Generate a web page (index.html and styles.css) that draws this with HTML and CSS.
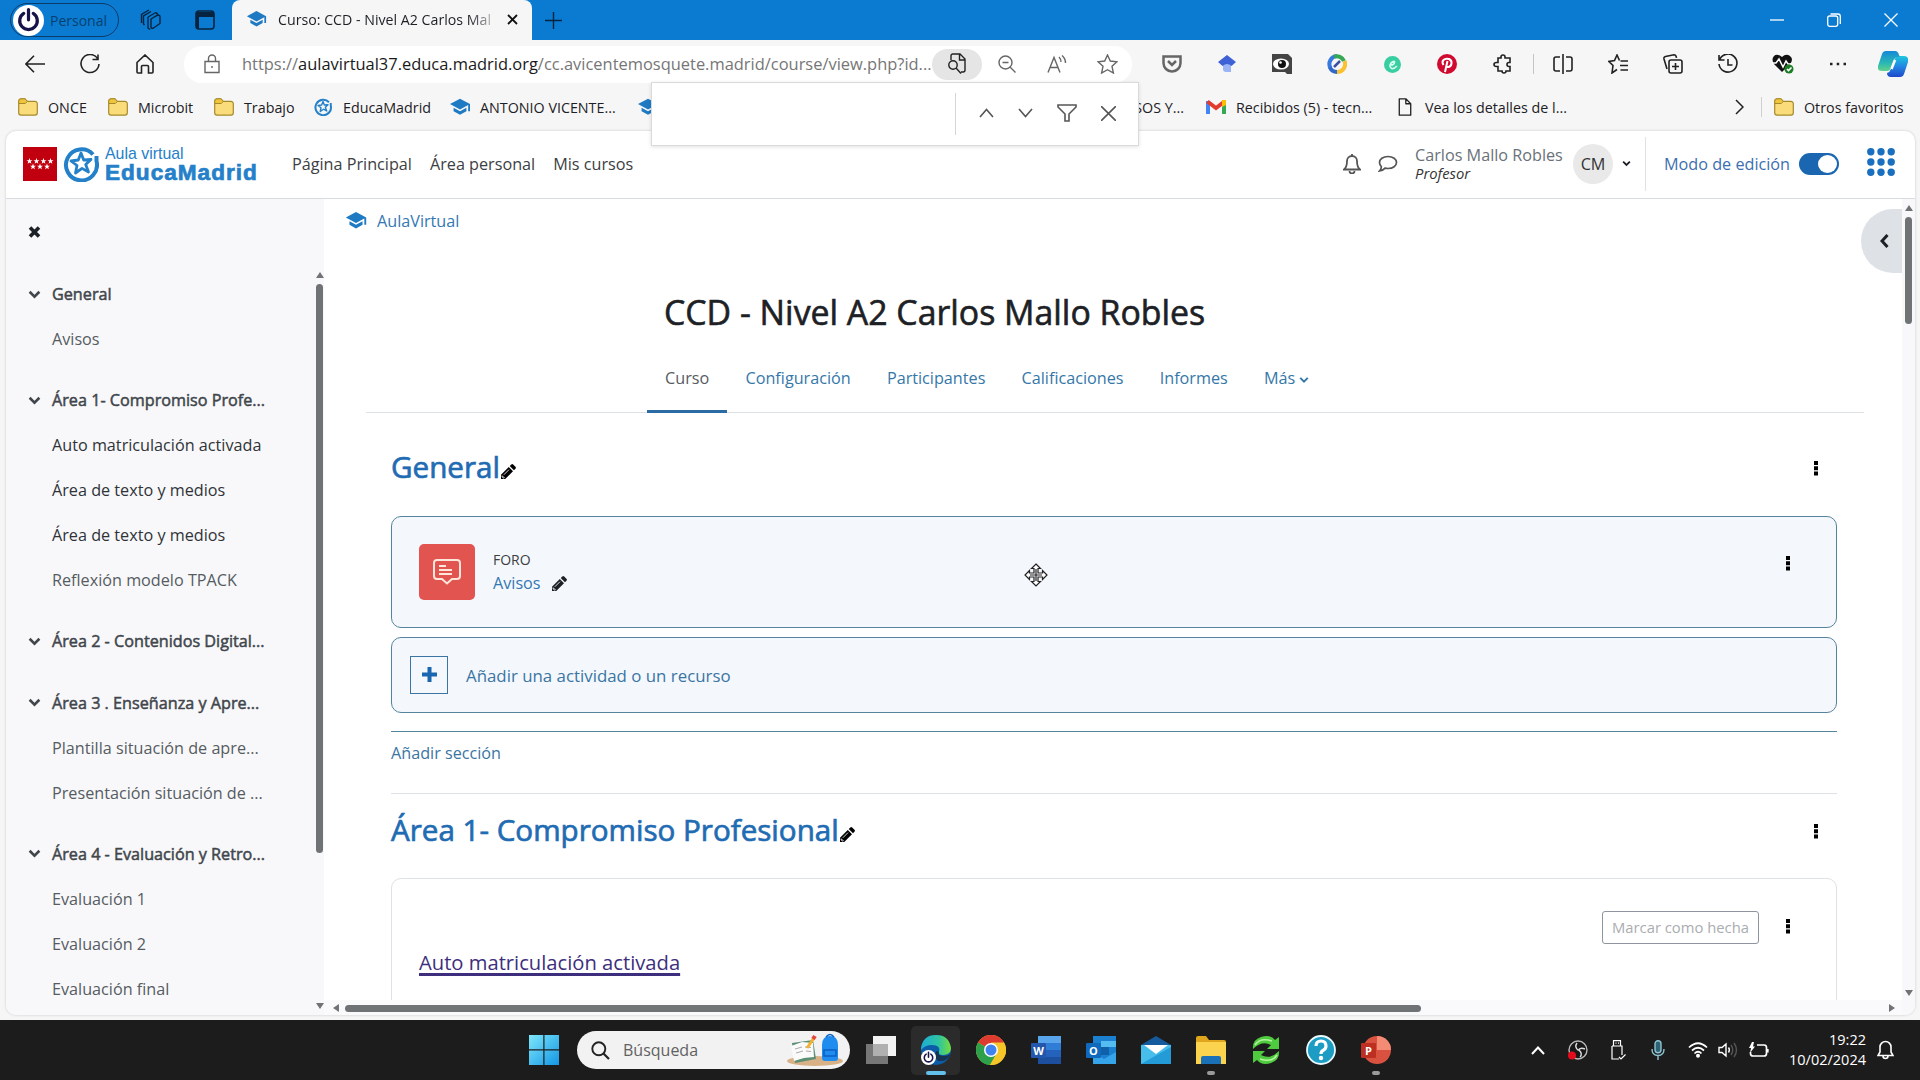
FILE: index.html
```html
<!DOCTYPE html>
<html lang="es">
<head>
    <meta charset="UTF-8">
    <meta name="viewport" content="width=device-width, initial-scale=1.0">
    <title>Curso: CCD - Nivel A2 Carlos Mallo Robles</title>
    <link rel="stylesheet" href="styles.css">
</head>
<body>
    <!-- Shared icons -->
    <svg class="sprite">
        <symbol id="cap" viewBox="0 0 24 20">
            <path d="M12 0 0 6.5 12 13l9.8-5.3V15H24V6.5z"/>
            <path d="M4.3 10.8V15l7.7 4.3 7.7-4.3v-4.2L12 15z"/>
        </symbol>
        <symbol id="folder" viewBox="0 0 20 18">
            <path d="M.7 3.5A2.5 2.5 0 0 1 3 .8h4l2 2.5h8a2.4 2.4 0 0 1 2.3 2.5v9a2.4 2.4 0 0 1-2.3 2.4H3a2.4 2.4 0 0 1-2.3-2.4z" fill="#fbdc7b" stroke="#a58a2c" stroke-width="1.2"/>
            <path d="M.8 5.5h6.5L9.400 3.300 7 .8H3A2.500 2.500 0 0 0 .7 3.500z" fill="#f0c53c" stroke="#a58a2c"/>
        </symbol>
        <symbol id="star-logo" viewBox="0 0 36 36">
            <path d="M30 8.500A15.500 15.500 0 1 0 33.500 15V10" fill="none" stroke="#2480c9" stroke-width="4"/>
            <path d="m18 7 2.700 7 7.300-.5-5.300 5 2.800 7.500-6.500-3.600-6.500 4.600 1.500-7.500-6-4.500 7.300-1z" fill="none" stroke="#2480c9" stroke-width="2.800" stroke-linejoin="round"/>
        </symbol>
        <symbol id="power" viewBox="0 0 24 24">
            <circle cx="12" cy="12" r="12" fill="#fff"/>
            <path d="M8.300 6.500a6.800 6.800 0 1 0 7.400 0M12 3.500v8" fill="none" stroke="#17134a" stroke-width="2.500" stroke-linecap="round"/>
        </symbol>
        <symbol id="chev" viewBox="0 0 12 8">
            <path d="m1.500 1.500 4.500 4.500 4.500-4.500" fill="none" stroke="currentColor" stroke-width="2.400"/>
        </symbol>
        <symbol id="pencil" viewBox="0 0 16 16">
            <path d="M0 16v-4.500L8.300 3.200l4.500 4.500L4.500 16zM9.300 2.200 11 .6q1-1 2 0L15.400 3q1 1 0 2l-1.600 1.700z"/>
            <path d="m1.300 12.500 2.200 2.200-.8.5-1.500-1.500zM3 11.500l5.500-5.500" fill="none" stroke="#fff" stroke-width=".9"/>
        </symbol>
        <symbol id="dots" viewBox="0 0 4 16">
            <path d="M0 1h4v4H0zM0 6.200h4v4H0zM0 11.400h4v4H0z"/>
        </symbol>
    </svg>

    <!-- Window title bar -->
    <div class="titlebar">
        <div class="profile"><svg width="31" height="31"><use href="#power"/></svg><span>Personal</span></div>
        <svg class="tb-icon workspaces" width="22" height="22" viewBox="0 0 22 22"><path d="m8 8 7-4a1.500 1.500 0 0 1 2 .5l1 1M8 8v11l2 1.500M4.500 16 3.500 15V7L11 2.500M1.500 14V5.500L9 1M11 10l6-3.500q3-1 3 1.500v6.500L13.500 19q-2.500 1-2.500-1z" fill="none" stroke="#06243f" stroke-width="1.400"/></svg>
        <svg class="tb-icon" width="20" height="20" viewBox="0 0 20 20"><rect x="1" y="1" width="18" height="18" rx="3" fill="none" stroke="#06243f" stroke-width="1.600"/><path d="M1 2h18v5H1zM1 7h3v12H1z" fill="#06243f"/></svg>
        <div class="tab">
            <svg class="blue" width="21" height="16"><use href="#cap"/></svg>
            <span class="tab-title">Curso: CCD - Nivel A2 Carlos Mal</span>
            <svg width="11" height="11" viewBox="0 0 11 11"><path d="m1 1 9 9M10 1l-9 9" stroke="#111" stroke-width="1.800"/></svg>
        </div>
        <svg class="new-tab" width="17" height="17" viewBox="0 0 17 17"><path d="M8.500 0v17M0 8.500h17" stroke="#06243f" stroke-width="1.400"/></svg>
        <div class="win-controls">
            <svg width="14" height="14" viewBox="0 0 14 14"><path d="M0 7h14"/></svg>
            <svg width="14" height="14" viewBox="0 0 14 14"><rect x=".7" y="3" width="10" height="10.300" rx="2"/><path d="M3.500 1h7.500q2.300 0 2.300 2.300V11"/></svg>
            <svg width="14" height="14" viewBox="0 0 14 14"><path d="m.5.5 13 13M13.500.5l-13 13"/></svg>
        </div>
    </div>

    <!-- Address row -->
    <div class="toolbar">
        <div class="slot"><svg width="20" height="18" viewBox="0 0 20 18"><path d="M9 .8.900 9 9 17.200M1 9h19"/></svg></div>
        <div class="slot"><svg width="20" height="20" viewBox="0 0 20 20"><path d="M17.500 4.500A9 9 0 1 0 19 10M18 .5v5h-5.500"/></svg></div>
        <div class="slot home"><svg width="18" height="20" viewBox="0 0 18 20"><path d="M1 8.500 9 1l8 7.500V18q0 1-1 1h-3.500v-6.500q0-1-1-1h-5q-1 0-1 1V19H2q-1 0-1-1z"/></svg></div>
        <div class="address">
            <svg class="lock" width="16" height="20" viewBox="0 0 16 20"><path d="M1 7.500h14V18.500H1zM4.500 7V4.500a3.500 3.500 0 0 1 7 0V7M8 12v2"/></svg>
            <span class="url">https://<b>aulavirtual37.educa.madrid.org</b>/cc.avicentemosquete.madrid/course/view.php?id...</span>
            <div class="address-icon find"><svg width="20" height="22" viewBox="0 0 20 22"><path d="M4 7V3q0-2 2-2h7l5 5v11q0 2-2 2h-2M12.500 1v6H18"/><circle cx="6" cy="12" r="4.200"/><path d="m9 15 5 5.500"/></svg></div>
            <div class="address-icon"><svg width="18" height="18" viewBox="0 0 18 18"><circle cx="7.500" cy="7.500" r="6.500"/><path d="m12 12 5.500 5.500M4.500 7.500h6"/></svg></div>
            <div class="address-icon"><svg width="20" height="18" viewBox="0 0 20 18"><path d="m1 17.500 6-15 6 15M3 12.500h8M12 2q2 2 2 5M15 .5q3.500 3 3.500 7.500"/></svg></div>
            <div class="address-icon"><svg width="21" height="20" viewBox="0 0 21 20"><path d="m10.500 1 2.800 6 6.700.8-5 4.500 1.400 6.700-5.900-3.300L4.600 19 6 12.300l-5-4.500L7.700 7z"/></svg></div>
        </div>
        <div class="extensions">
            <div class="slot"><svg width="20" height="18" viewBox="0 0 20 18"><path d="M1.500 1.500h17V8a8.500 8.500 0 0 1-17 0z" stroke="#666" stroke-width="2.500"/><path d="m6 6 4 4 4-4" stroke="#666" stroke-width="2.500"/></svg></div>
            <div class="slot"><svg width="18" height="18" viewBox="0 0 18 18"><path d="M5 8h8v9H8q-3 0-3-3z" fill="#9ab4f5" stroke="none"/><path d="m9 0 9 7-4.500 4Q9 7 4.500 11L0 7z" fill="#3e62d6" stroke="none"/></svg></div>
            <div class="slot"><svg width="20" height="20" viewBox="0 0 20 20"><path d="M0 0h16l4 4v16h-5l-2-2H0z" fill="#444" stroke="none"/><ellipse cx="9" cy="10" rx="8" ry="5.500" fill="#fff" stroke="none"/><circle cx="10" cy="10" r="4" fill="#111" stroke="none"/><circle cx="8.500" cy="8.500" r="1.300" fill="#fff" stroke="none"/></svg></div>
            <div class="slot"><svg width="20" height="20" viewBox="0 0 20 20"><path d="M3.500 14A8 8 0 0 1 10 2" stroke="#3679df" stroke-width="4"/><path d="M7 2.700A8 8 0 0 1 17 7" stroke="#35a853" stroke-width="4"/><path d="M17.500 7A8 8 0 0 1 10 18" stroke="#fbc02d" stroke-width="4"/><path d="M3 13.500Q5 18 10 18" stroke="#2f68cb" stroke-width="4"/><path d="m7 13 6-6" stroke="#3c4fa0" stroke-width="2.500"/></svg></div>
            <div class="slot"><svg width="17" height="17" viewBox="0 0 17 17"><circle cx="8.500" cy="8.500" r="8.500" fill="#39cda2" stroke="none"/><path d="M7 9q3 0 3.500-2.500T7 7q-2 3 0 5t6-2" stroke="#d5fff0"/></svg></div>
            <div class="slot"><svg width="20" height="20" viewBox="0 0 20 20"><circle cx="10" cy="10" r="10" fill="#d00b31" stroke="none"/><path d="M6.500 11Q4.500 8 6.500 6T12 5q3 1.500 2.500 4.500T11.500 13 9.500 11.500M10.500 7 8 18" stroke="#fff" stroke-width="2"/></svg></div>
            <div class="slot"><svg width="19" height="20" viewBox="0 0 19 20"><path d="M5 4h3V3q0-2 2-2t2 2v1h5v4.500h-1q-2 0-2 2t2 2h1V17h-4q0 2-2 2t-2-2H5v-4.500H3.500Q1 12.500 1 10.500t2.500-2H5z"/></svg></div>
        </div>
        <div class="vline"></div>
        <div class="tools">
            <div class="slot"><svg width="20" height="20" viewBox="0 0 20 20"><path d="M7 3H3Q1 3 1 5v10q0 2 2 2h4M10 0v20M13 3h4q2 0 2 2v10q0 2-2 2h-4"/></svg></div>
            <div class="slot"><svg width="20" height="20" viewBox="0 0 20 20"><path d="M11.500 6.500 9 1 6.500 6.500 1 7.500l4 4L4 19l5-3.500M12.500 7H20M12 11.500h8M12.500 16H20"/></svg></div>
            <div class="slot"><svg width="20" height="20" viewBox="0 0 20 20"><rect x="6" y="6" width="13" height="13" rx="2"/><path d="M12.500 9v7M9 12.500h7M4 15 1 5q-.5-2 1.500-2.500L11 .800q2 0 2.500 3"/></svg></div>
            <div class="slot"><svg width="20" height="20" viewBox="0 0 20 20"><path d="M1 1v5h5.500M1.500 6A9 9 0 1 1 1 10M10 5v6h4.500"/></svg></div>
            <div class="slot"><svg width="22" height="20" viewBox="0 0 22 20"><path d="m10 18-8-8Q-1 5 2 2t8 1q4-4 8-1t0 8z" fill="#111" stroke="none"/><path d="M0 9h4l3-4 4 8 3-6 2 3h4" stroke="#fff" stroke-width="1.500"/><circle cx="17" cy="15" r="4.500" fill="#1d7d24" stroke="none"/><path d="m15 15 1.500 1.500 3-3" stroke="#fff"/></svg></div>
            <div class="slot"><svg width="18" height="4" viewBox="0 0 18 4"><path d="M1 2h2.500M7.700 2h2.500M14.500 2H17" stroke-width="2.500"/></svg></div>
            <div class="slot"><svg width="30" height="26" viewBox="0 0 30 26"><defs><linearGradient id="cop1" x2="0" y2="1"><stop stop-color="#1488d8"/><stop offset=".6" stop-color="#2ab7b4"/><stop offset="1" stop-color="#63d28c"/></linearGradient><linearGradient id="cop2" x2="0" y2="1"><stop stop-color="#1cc7dd"/><stop offset=".5" stop-color="#2386e4"/><stop offset="1" stop-color="#2048c9"/></linearGradient></defs><path d="M22 26h-9q-4 0-4-4 3-1 4-4l4-10q1-3 4-3h5q5 0 4 6l-4 12q-1 3-4 3z" fill="url(#cop2)" stroke="none"/><path d="M8 0h9q3 0 4 4l1 2q-4-1-6 3l-3 8q-1 3-4 3H4q-5 0-4-5L4 3q1-3 4-3z" fill="url(#cop1)" stroke="none"/><path d="m17 9-3.500 9" stroke="#fff" stroke-width="2.500"/></svg></div>
        </div>
    </div>

    <!-- Bookmarks row -->
    <div class="bookmarks">
        <div class="bookmark"><svg><use href="#folder"/></svg>ONCE</div>
        <div class="bookmark"><svg><use href="#folder"/></svg>Microbit</div>
        <div class="bookmark"><svg><use href="#folder"/></svg>Trabajo</div>
        <div class="bookmark"><svg><use href="#star-logo"/></svg>EducaMadrid</div>
        <div class="bookmark"><svg class="blue"><use href="#cap"/></svg>ANTONIO VICENTE...</div>
        <div class="bookmark"><svg class="blue"><use href="#cap"/></svg><span class="cut">SOS Y...</span></div>
        <div class="bookmark"><svg viewBox="0 0 20 16"><path d="M2 15V2" stroke="#4285f4" stroke-width="4"/><path d="M18 15V2" stroke="#34a853" stroke-width="4"/><path d="m1.500 2.500 8.500 6.500 8.500-6.500" fill="none" stroke="#e33b2e" stroke-width="4"/><path d="M16 1h4v5l-4 2z" fill="#fbbc04"/></svg>Recibidos (5) - tecn...</div>
        <div class="bookmark"><svg viewBox="0 0 18 22"><path d="M2 1h8l6 6v14H2zM10 1v6h6" fill="none" stroke="#222" stroke-width="1.600" stroke-linejoin="round"/></svg>Vea los detalles de l...</div>
        <svg class="more" width="9" height="16" viewBox="0 0 9 16"><path d="m1 1 7 7-7 7" fill="none" stroke="#222" stroke-width="1.500"/></svg>
        <div class="bookmark others"><svg><use href="#folder"/></svg>Otros favoritos</div>

        <div class="findbar">
            <svg width="15" height="10" viewBox="0 0 15 10"><path d="m1 9 6.500-7.500L14 9"/></svg>
            <svg width="15" height="10" viewBox="0 0 15 10"><path d="m1 1 6.500 7.500L14 1"/></svg>
            <svg width="20" height="18" viewBox="0 0 20 18"><path d="M1 1h18v2l-7 7v7H8v-7L1 3z"/></svg>
            <svg width="15" height="15" viewBox="0 0 15 15"><path d="m0 0 15 15M15 0 0 15"/></svg>
        </div>
    </div>

    <div class="page">
        <header class="site-header">
            <svg class="madrid" width="34" height="34" viewBox="0 0 34 34"><path d="M0 0h34v34H0z" fill="#c1000f"/><g fill="#fff"><path id="st" d="m6.500 11 .8 2.200h2.200l-1.800 1.400.7 2.200-1.900-1.300-1.900 1.300.7-2.200-1.800-1.400h2.200z"/><use href="#st" x="7"/><use href="#st" x="14"/><use href="#st" x="21"/><use href="#st" x="3.500" y="5.500"/><use href="#st" x="10.500" y="5.500"/><use href="#st" x="17.500" y="5.500"/></g></svg>
            <svg width="36" height="36"><use href="#star-logo"/></svg>
            <div class="brand"><span>Aula virtual</span><strong>EducaMadrid</strong></div>
            <nav class="main-nav"><a>Página Principal</a><a>Área personal</a><a>Mis cursos</a></nav>
            <div class="user-area">
                <svg width="18" height="20" viewBox="0 0 18 20"><path d="M9 2a5 5 0 0 1 5 5q0 6 3 8.500H1Q4 13 4 7a5 5 0 0 1 5-5zM9 0v2M6.500 17a2.500 2.500 0 0 0 5 0" fill="none" stroke="#555" stroke-width="1.800"/></svg>
                <svg class="chat" width="20" height="18" viewBox="0 0 20 18"><path d="M10 1.500c5 0 8.500 2.500 8.500 6s-3.500 6-8.500 6q-1.500 0-3-.4Q5 15.500 1.500 16q2-2 1.800-4.500Q1.500 9.500 1.500 7.500c0-3.500 3.500-6 8.500-6z" fill="none" stroke="#555" stroke-width="1.700"/></svg>
                <div class="user"><span>Carlos Mallo Robles</span><em>Profesor</em></div>
                <div class="avatar">CM</div>
                <svg class="user-caret" width="9" height="7"><use href="#chev"/></svg>
                <div class="edit-mode"><span>Modo de edición</span><div class="switch"></div></div>
                <svg class="apps" width="28" height="28" viewBox="0 0 28 28"><g fill="#1b6fbf"><circle cx="3.800" cy="3.800" r="3.700"/><circle cx="14" cy="3.800" r="3.700"/><circle cx="24.200" cy="3.800" r="3.700"/><circle cx="3.800" cy="14" r="3.700"/><circle cx="14" cy="14" r="3.700"/><circle cx="24.200" cy="14" r="3.700"/><circle cx="3.800" cy="24.200" r="3.700"/><circle cx="14" cy="24.200" r="3.700"/><circle cx="24.200" cy="24.200" r="3.700"/></g></svg>
            </div>
        </header>

        <div class="columns">
            <aside class="course-index">
                <div class="index-list">
                    <svg class="close" width="13" height="12" viewBox="0 0 13 12"><path d="m2 1.500 9 9M11 1.500l-9 9" stroke="#1d2125" stroke-width="3.600"/></svg>
                    <section><h4><svg><use href="#chev"/></svg>General</h4><a>Avisos</a></section>
                    <section><h4><svg><use href="#chev"/></svg>Área 1- Compromiso Profe...</h4><a class="dark">Auto matriculación activada</a><a class="dark">Área de texto y medios</a><a class="dark">Área de texto y medios</a><a>Reflexión modelo TPACK</a></section>
                    <section><h4><svg><use href="#chev"/></svg>Área 2 - Contenidos Digital...</h4></section>
                    <section><h4><svg><use href="#chev"/></svg>Área 3 . Enseñanza y Apre...</h4><a>Plantilla situación de apre...</a><a>Presentación situación de ...</a></section>
                    <section><h4><svg><use href="#chev"/></svg>Área 4 - Evaluación y Retro...</h4><a>Evaluación 1</a><a>Evaluación 2</a><a>Evaluación final</a></section>
                </div>
                <div class="scroll index-scroll"><i class="up"></i><div class="thumb"></div><i class="down"></i></div>
            </aside>

            <div class="content">
                <main>
                    <div class="breadcrumb"><svg class="blue" width="22" height="17"><use href="#cap"/></svg>AulaVirtual</div>
                    <h1>CCD - Nivel A2 Carlos Mallo Robles</h1>
                    <nav class="tabs">
                        <a class="active">Curso</a><a>Configuración</a><a>Participantes</a><a>Calificaciones</a><a>Informes</a><a>Más <svg width="10" height="8"><use href="#chev"/></svg></a>
                    </nav>

                    <div class="section first">
                        <div class="section-head"><h2>General</h2><svg class="pencil"><use href="#pencil"/></svg><svg class="dots"><use href="#dots"/></svg></div>
                        <div class="card activity selected">
                            <div class="forum-icon"><svg width="28" height="26" viewBox="0 0 28 26"><path d="M4 1h20q3 0 3 3v13q0 3-3 3h-5l-5 4.500L9 20H4q-3 0-3-3V4q0-3 3-3zM6 7h7M6 11h13M6 15h13" fill="none" stroke="#ffe6da" stroke-width="2"/></svg></div>
                            <div class="activity-name"><small>FORO</small><span>Avisos<svg class="pencil"><use href="#pencil"/></svg></span></div>
                            <svg class="dots"><use href="#dots"/></svg>
                        </div>
                        <div class="card add-activity selected"><div class="plus"><svg width="15" height="15" viewBox="0 0 15 15"><path d="M7.500 0v15M0 7.500h15" stroke="#1b66b0" stroke-width="4"/></svg></div><span>Añadir una actividad o un recurso</span></div>
                        <div class="add-section">Añadir sección</div>
                    </div>

                    <div class="section">
                        <div class="section-head"><h2>Área 1- Compromiso Profesional</h2><svg class="pencil"><use href="#pencil"/></svg><svg class="dots"><use href="#dots"/></svg></div>
                        <div class="card resource">
                            <div class="resource-actions"><button>Marcar como hecha</button><svg class="dots"><use href="#dots"/></svg></div>
                            <a>Auto matriculación activada</a>
                        </div>
                    </div>
                </main>
                <div class="hscroll"><i class="left"></i><div class="thumb"></div><i class="right"></i></div>
                <svg class="cursor" width="24" height="24" viewBox="0 0 24 24"><path d="m12 1 4.500 4.500H14V10h4.500V7.500L23 12l-4.500 4.500V14H14v4.500h2.500L12 23l-4.500-4.500H10V14H5.500v2.500L1 12l4.500-4.500V10H10V5.500H7.500z" fill="#fff" stroke="#222" stroke-width="1.200"/><path d="M12 6v12M6 12h12" stroke="#222" stroke-width="1.200"/></svg>
                <div class="drawer-toggle"><svg width="9" height="14" viewBox="0 0 9 14"><path d="M7.500 1 2 7l5.500 6" fill="none" stroke="#1d2125" stroke-width="3"/></svg></div>
            </div>
            <div class="scroll page-scroll"><i class="up"></i><div class="thumb"></div><i class="down"></i></div>
        </div>
    </div>

    <!-- Taskbar -->
    <footer class="taskbar">
        <svg class="start" width="30" height="30" viewBox="0 0 30 30"><defs><linearGradient id="win" x2="1" y2="1"><stop stop-color="#7fe7fb"/><stop offset="1" stop-color="#1296e4"/></linearGradient></defs><path d="M0 0h14.300v14.300H0zM15.500 0H30v14.300H15.500zM0 15.500h14.300V30H0zM15.500 15.500H30V30H15.500z" fill="url(#win)"/></svg>
        <div class="search">
            <svg width="19" height="19" viewBox="0 0 19 19"><circle cx="7.800" cy="7.800" r="6.500" fill="none" stroke="#222" stroke-width="1.900"/><path d="m12.500 12.500 5.500 5.500" stroke="#222" stroke-width="2.200"/></svg>
            <span>Búsqueda</span>
            <svg class="school" width="56" height="34" viewBox="0 0 56 34"><ellipse cx="28" cy="28" rx="28" ry="5" fill="#d9b187"/><path d="m5 10 21-3 3 19-21 4z" fill="#5b8f75"/><path d="m4 13 11-4 11 1 1 14-10 1-10 3z" fill="#fafafa"/><path d="m8 16 7-2m3 0 6 .5M9 20l7-2m3 0 5 .5" stroke="#aaa"/><path d="m20 15 7-10" stroke="#f3b12f" stroke-width="3"/><path d="m26 6 2-3" stroke="#e4463c" stroke-width="4"/><path d="M35 12q0-9 8-9t8 9v13q0 3-3 3H38q-3 0-3-3z" fill="#1f8cf0"/><path d="M39 4q4-5 8 0M37 17h12v6H37z" fill="none" stroke="#0d5fc0" stroke-width="1.500"/></svg>
        </div>
        <div class="apps-row">
            <div class="app"><svg width="30" height="28" viewBox="0 0 30 28"><path d="M7 0h23v20H7z" fill="#f2f2f2"/><path d="M0 8h22v20H0z" fill="#777"/><path d="M7 8h15v12H7z" fill="#b0b0b0"/></svg></div>
            <div class="app current"><svg width="30" height="30" viewBox="0 0 30 30"><defs><linearGradient id="edg" x2="1"><stop stop-color="#1bacd8"/><stop offset=".6" stop-color="#2fc5a0"/><stop offset="1" stop-color="#77dc3d"/></linearGradient></defs><circle cx="15" cy="15" r="15" fill="#0d5ca8"/><path d="M0 13Q2 0 15 0q13 0 15 13 0 7-8 7-5 0-4-3 2-7-7-7-7 0-11 5z" fill="url(#edg)"/><path d="M18 17q-2 4 5 4 4 0 6.500-2-3 8-12 7-6-3-2-10z" fill="#1d1d1f" opacity=".65"/><use href="#power" y="15" width="15" height="15"/></svg><i></i></div>
            <div class="app"><svg width="30" height="30" viewBox="0 0 30 30"><circle cx="15" cy="15" r="15" fill="#f6c628"/><path d="M15 15 2 7.500A15 15 0 0 1 28 7.500z" fill="#de3b30"/><path d="M15 15 2 7.500A15 15 0 0 0 14 30l7-12z" fill="#2da04b"/><path d="M15 7.500h13A15 15 0 0 1 14 30l7-12z" fill="#f6c628"/><circle cx="15" cy="15" r="7" fill="#fff"/><circle cx="15" cy="15" r="5.500" fill="#4083ee"/></svg></div>
            <div class="app"><svg width="30" height="28" viewBox="0 0 30 28"><path d="M7 0h23v28H7z" fill="#1d4f9f"/><path d="M7 0h23v7H7z" fill="#58a5ec"/><path d="M7 7h23v7H7z" fill="#2f7dd6"/><path d="M7 14h23v7H7z" fill="#2462bb"/><rect y="7" width="15" height="15" rx="1" fill="#2357ad"/></svg><b>W</b></div>
            <div class="app"><svg width="30" height="28" viewBox="0 0 30 28"><path d="M7 0h23v28H7z" fill="#1b80d0"/><path d="M15 5h15v6H15z" fill="#54bcf1"/><path d="M15 11h8v8h-8z" fill="#0f5fab"/><path d="m7 16 11 7 12-7v12H7z" fill="#36a4e8"/><rect y="7" width="15" height="15" rx="1" fill="#1169bb"/></svg><b>O</b></div>
            <div class="app"><svg width="30" height="28" viewBox="0 0 30 28"><path d="M0 9 15 0l15 9v3H0z" fill="#165a9e"/><path d="M0 9h30v19H0z" fill="#47bdec"/><path d="M3 9h24L15 18z" fill="#fff"/><path d="m0 28 30-17v17z" fill="#239bd6"/></svg></div>
            <div class="app open"><svg width="30" height="28" viewBox="0 0 30 28"><path d="M0 2q0-2 2-2h8l3 4h15q2 0 2 2v22H0z" fill="#dfa51c"/><path d="M0 6h30v22H0z" fill="#fbd34f"/><path d="M5 28v-6q0-2 2-2h16q2 0 2 2v6z" fill="#1a71b8"/></svg><i></i></div>
            <div class="app"><svg width="28" height="30" viewBox="0 0 28 30"><path d="M1 14Q0 5 9 2t14 3l4-3v12H15l4-4q-9-5-18 4zM27 16q1 9-8 12T5 25l-4 3V16h12l-4 4q9 5 18-4z" fill="#4ecb3e"/><path d="M3 10Q8 2 20 6M25 20q-5 8-17 4" fill="none" stroke="#b5f3a0" stroke-width="1.500"/></svg></div>
            <div class="app"><svg width="30" height="30" viewBox="0 0 30 30"><circle cx="15" cy="15" r="14" fill="#1d9cc4" stroke="#eafaff" stroke-width="1.800"/><path d="M10 11q0-5 5-5t5 5q0 3-3 4.500-2 1-2 3.500" fill="none" stroke="#fff" stroke-width="3.200"/><circle cx="15" cy="23" r="2.200" fill="#fff"/></svg></div>
            <div class="app open"><svg width="30" height="28" viewBox="0 0 30 28"><circle cx="16" cy="14" r="14" fill="#d9523f"/><path d="M16 0a14 14 0 0 1 14 14H16z" fill="#f48b74"/><rect y="7" width="15" height="15" rx="1" fill="#bd2f20"/></svg><b>P</b><i></i></div>
        </div>
        <div class="tray">
            <div class="tray-slot"><svg width="14" height="9" viewBox="0 0 14 9"><path d="m1 8 6-6.500L13 8" stroke-width="2"/></svg></div>
            <div class="tray-slot"><svg width="20" height="20" viewBox="0 0 20 20"><circle cx="10" cy="10" r="9" fill="#181818" stroke="#bbb"/><path d="M9 3q-3 4 1.500 7.500M17 9q-5-2-7 1.500M12 17q3-3-1-7" stroke="#ddd"/><circle cx="4" cy="15.500" r="4" fill="#e30b1c" stroke="none"/></svg></div>
            <div class="tray-slot"><svg width="15" height="20" viewBox="0 0 15 20"><path d="M2.500 6V.700h7V6M1 6h10v9M1 6v13h7M8 17l2 2 4.500-4.500M4.500 3.200h1M7 3.200h1" stroke-width="1.200"/></svg></div>
            <div class="tray-slot"><svg class="mic" width="14" height="20" viewBox="0 0 14 20"><rect x="4" y=".8" width="6" height="12" rx="3" fill="#2c6475"/><path d="M1 9q0 6.500 6 6.500T13 9M7 15.500V20"/></svg></div>
            <div class="tray-slot"><svg width="20" height="16" viewBox="0 0 20 16"><path d="M1 5.500q9-8.500 18 0M4 8.500q6-5.500 12 0M6.500 11.500q3.500-3.500 7 0" stroke-width="1.700"/><circle cx="10" cy="13.800" r="2" fill="#fff" stroke="none"/></svg></div>
            <svg width="20" height="16" viewBox="0 0 20 16"><path d="M1 5.500h3L8 2v12l-4-3.500H1zM10.500 5.500q1.800 2.500 0 5"/><path d="M13 3q3.500 5 0 10M16 1q5 7 0 14" stroke="#555"/></svg>
            <svg class="battery" width="20" height="16" viewBox="0 0 20 16"><path d="M8 3h7q2.500 0 2.500 2.500v6Q17.500 14 15 14H4q-2.500 0-2.500-2.500V10M18.800 7v3.500" stroke-width="1.700"/><path d="M3 0 0 6h2l-1 5 5-6.500H4L5 0z" fill="#fff" stroke="none"/></svg>
            <div class="clock"><span>19:22</span><span>10/02/2024</span></div>
            <svg width="17" height="20" viewBox="0 0 17 20"><path d="M8.500 1.500A5.500 5.500 0 0 1 14 7v5l2 3.500H1L3 12V7a5.500 5.500 0 0 1 5.500-5.500zM6 16a2.500 2.500 0 0 0 5 0" stroke-width="1.600"/></svg>
        </div>
    </footer>
</body>
</html>
```
FILE: styles.css
```css
* {
    box-sizing: border-box;
}

body {
    margin: 0;
    width: 1920px;
    height: 1080px;
    overflow: hidden;
    display: flex;
    flex-direction: column;
    background: #f6f6f7;
    font-family: 'Open Sans', 'Noto Sans', sans-serif;
    font-size: 16.2px;
    color: #1d2125;
}

svg {
    flex: none;
}

.sprite {
    position: absolute;
    width: 0;
    height: 0;
}

.blue {
    fill: #1f7ac4;
}

/* Title bar */
.titlebar {
    display: flex;
    align-items: center;
    height: 40px;
    background: #0a7bd1;
}

.profile {
    display: flex;
    align-items: center;
    gap: 6px;
    width: 109px;
    height: 34px;
    margin-left: 10px;
    padding-left: 2px;
    border: 1.5px solid #073c6b;
    border-radius: 17px;
    color: #07406f;
    font-size: 14px;
}

.workspaces {
    margin: 0 33px 0 21px;
}

.tab {
    display: flex;
    align-items: center;
    width: 300px;
    height: 40px;
    margin-left: 17px;
    padding: 0 14px 2px;
    background: #f6f6f7;
    border-radius: 8px 8px 0 0;
}

.tab-title {
    width: 218px;
    margin: 0 12px 0 11px;
    white-space: nowrap;
    font-size: 14.2px;
    -webkit-mask-image: linear-gradient(90deg, #000 88%, rgba(0, 0, 0, 0.2));
    mask-image: linear-gradient(90deg, #000 88%, rgba(0, 0, 0, 0.2));
}

.new-tab {
    margin-left: 13px;
}

.win-controls {
    display: flex;
    gap: 43px;
    margin-left: auto;
    margin-right: 22px;
    fill: none;
    stroke: #fff;
    stroke-width: 1.3;
}

/* Address row */
.toolbar {
    display: flex;
    align-items: center;
    height: 48px;
    padding-left: 7px;
    fill: none;
    stroke: #222;
    stroke-width: 1.6;
}

.slot {
    display: flex;
    justify-content: center;
    flex: none;
    width: 55px;
}

.address {
    display: flex;
    align-items: center;
    width: 955px;
    height: 37px;
    margin-left: 12px;
    padding-left: 20px;
    background: #fff;
    border-radius: 18px;
    stroke: #666;
    stroke-width: 1.4;
}

.url {
    width: 690px;
    margin: -2px 0 0 22px;
    white-space: nowrap;
    font-size: 16.45px;
    color: #767676;
}

.url b {
    font-weight: normal;
    color: #1a1a1a;
}

.address-icon {
    display: flex;
    align-items: center;
    justify-content: center;
    width: 50px;
    height: 31px;
    border-radius: 16px;
}

.find {
    background: #e5e5e5;
    stroke: #222;
}

.extensions,
.tools {
    display: flex;
    align-items: center;
}

.extensions {
    margin-left: 12.5px;
}

.vline {
    width: 1px;
    height: 20px;
    margin: 0 2px 0 3px;
    background: #c4c4c4;
}

/* Bookmarks */
.bookmarks {
    position: relative;
    display: grid;
    grid-template-columns: 90px 106px 99px 137px 188px 568px 189px 320px 36px 1fr;
    align-items: center;
    height: 43px;
    padding: 0 0 5px 18px;
    font-size: 14.3px;
    white-space: nowrap;
}

.bookmark {
    display: flex;
    align-items: center;
    gap: 10px;
}

.bookmark svg {
    width: 20px;
    height: 18px;
}

.cut {
    margin-left: auto;
    margin-right: 22px;
}

.more {
    margin: 0 auto 0 20px;
}

.others {
    height: 20px;
    margin-left: 10px;
    padding-left: 12px;
    border-left: 1px solid #d0d0d0;
}

.findbar {
    position: absolute;
    z-index: 2;
    top: -6px;
    left: 651px;
    display: flex;
    align-items: center;
    gap: 24px;
    width: 488px;
    height: 64px;
    padding: 0 0 2px 327px;
    background: linear-gradient(#d5d5d5, #d5d5d5) 303px center / 1px 42px no-repeat #fff;
    border: 1px solid #dadada;
    box-shadow: 0 1px 4px rgba(0, 0, 0, 0.12);
    fill: none;
    stroke: #555;
    stroke-width: 1.6;
}

/* Page frame */
.page {
    display: flex;
    flex-direction: column;
    width: 1909px;
    height: 884px;
    margin-left: 6px;
    overflow: hidden;
    background: #fff;
    border-radius: 10px;
    box-shadow: 0 0 3px rgba(0, 0, 0, 0.18);
}

.site-header {
    display: flex;
    align-items: center;
    flex: none;
    height: 68px;
    padding: 0 20px 2px 17px;
    border-bottom: 1px solid #d9dcdf;
}

.madrid {
    margin-right: 6px;
}

.brand {
    display: flex;
    flex-direction: column;
    width: 187px;
    margin-left: 6px;
    font-family: 'Liberation Sans', sans-serif;
    font-size: 15.9px;
    line-height: 19px;
    color: #2480c9;
}

.brand strong {
    font-size: 22.6px;
    line-height: 20px;
    letter-spacing: 1px;
    -webkit-text-stroke: 0.7px;
}

.main-nav {
    display: flex;
    gap: 18px;
    color: #3c4043;
}

.user-area {
    display: flex;
    align-items: center;
    height: 54px;
    margin-left: auto;
}

.chat {
    margin: 0 17px;
}

.user {
    display: flex;
    flex-direction: column;
    width: 158px;
    line-height: 18px;
    color: #6a7178;
    white-space: nowrap;
}

.user em {
    font-size: 14.8px;
    color: #333;
}

.avatar {
    width: 40px;
    height: 40px;
    border-radius: 50%;
    background: #e9e9ea;
    color: #333;
    line-height: 40px;
    text-align: center;
}

.user-caret {
    margin: 0 14px 0 9px;
}

.edit-mode {
    display: flex;
    align-items: center;
    gap: 9px;
    height: 54px;
    padding-left: 18px;
    border-left: 1px solid #dee2e6;
    color: #3b6fb0;
}

.switch {
    width: 40px;
    height: 22px;
    padding: 2px;
    background: #1b66b0;
    border-radius: 11px;
}

.switch::after {
    content: '';
    display: block;
    width: 19px;
    height: 18px;
    margin-left: auto;
    background: #fff;
    border-radius: 50%;
}

.apps {
    margin: -4px 0 0 28px;
}

.columns {
    display: flex;
    flex: 1;
    min-height: 0;
}

/* Scrollbars */
i {
    display: block;
    width: 0;
    height: 0;
    border: 4px solid transparent;
}

.up {
    border-bottom: 6px solid #707376;
    border-top: 0;
}

.down {
    border-top: 6px solid #707376;
    border-bottom: 0;
}

.left {
    border-right: 6px solid #707376;
    border-left: 0;
}

.right {
    border-left: 6px solid #707376;
    border-right: 0;
}

.scroll {
    display: flex;
    flex-direction: column;
    align-items: center;
    flex: none;
}

.scroll .thumb {
    width: 7px;
    margin-top: 6px;
    background: #707376;
    border-radius: 4px;
}

.scroll .down {
    margin-top: auto;
}

.index-scroll {
    width: 9px;
    padding: 73px 0 6px;
}

.index-scroll .thumb {
    height: 569px;
}

.page-scroll {
    width: 13px;
    padding: 6px 0 19px;
    background: #f8f8fb;
}

.page-scroll .thumb {
    height: 107px;
}

/* Course index */
.course-index {
    display: flex;
    flex: none;
    width: 318px;
    background: #f8f8fb;
}

.index-list {
    flex: 1;
    padding: 27px 0 0 22px;
    color: #565c61;
    white-space: nowrap;
}

.close {
    display: block;
    margin-bottom: 33.5px;
}

.index-list section {
    margin-bottom: 16.2px;
}

.index-list h4,
.index-list a {
    display: flex;
    align-items: center;
    height: 45px;
    margin: 0;
    font-size: 16.2px;
}

.index-list h4 {
    font-weight: normal;
    color: #41464b;
    -webkit-text-stroke: 0.5px;
}

.index-list h4 svg {
    width: 13px;
    height: 9px;
    margin-right: 11px;
}

.index-list a {
    padding-left: 24px;
}

.index-list .dark {
    color: #2f3337;
}

/* Content */
.content {
    position: relative;
    display: flex;
    flex-direction: column;
    flex: 1;
    min-width: 0;
}

main {
    flex: 1;
    min-height: 0;
    overflow: hidden;
    padding: 0 38px 0 42px;
}

.breadcrumb {
    display: flex;
    align-items: center;
    gap: 10px;
    height: 43px;
    margin-left: -21px;
    color: #3577b3;
}

h1 {
    margin: 47px 0 1px 298px;
    height: 46px;
    font-size: 33.85px;
    font-weight: normal;
    line-height: 46px;
    -webkit-text-stroke: 0.6px;
}

.tabs {
    display: flex;
    height: 77px;
    padding-left: 281px;
    border-bottom: 1px solid #dee2e6;
    color: #3577a8;
}

.tabs a {
    padding: 30px 18.1px 0;
    line-height: 25px;
}

.tabs .active {
    margin-bottom: -1px;
    border-bottom: 3px solid #2c6ba3;
    color: #565c61;
}

.section {
    margin: 0 27px 0 25px;
    padding-top: 6px;
    border-top: 1px solid #dee2e6;
}

.section.first {
    padding-top: 24px;
    border: 0;
}

.section-head {
    display: flex;
    align-items: center;
    height: 61px;
    margin-bottom: 17px;
}

.first .section-head {
    margin-bottom: 18px;
}

h2 {
    margin: -2px 0 0;
    font-size: 29.6px;
    font-weight: normal;
    color: #1f6cb3;
    -webkit-text-stroke: 0.7px;
}

.pencil {
    width: 15px;
    height: 15px;
    margin: 7px 0 0 1px;
}

.dots {
    width: 4px;
    height: 16px;
    margin: 0 19px 0 auto;
}

.card {
    display: flex;
    border: 1px solid #dee2e6;
    border-radius: 10px;
}

.selected {
    background: #f4f8fc;
    border-color: #55849f;
}

.activity {
    height: 112px;
    padding: 27px;
}

.forum-icon {
    display: flex;
    align-items: center;
    justify-content: center;
    width: 56px;
    height: 56px;
    background: #e15450;
    border-radius: 5px;
}

.activity-name {
    display: flex;
    flex-direction: column;
    margin-left: 18px;
    padding-top: 4px;
    color: #3577b3;
}

.activity-name small {
    font-size: 14px;
    line-height: 24px;
    color: #3c4043;
}

.activity-name .pencil {
    margin: 0 0 -2px 11px;
    fill: #1d2125;
}

.activity .dots {
    margin: 11px 19px 0 auto;
}

.add-activity {
    align-items: center;
    gap: 18px;
    height: 76px;
    margin-top: 9px;
    padding-left: 18px;
    font-size: 16.85px;
    color: #3a75a3;
}

.plus {
    display: flex;
    justify-content: center;
    width: 38px;
    height: 38px;
    padding-top: 10px;
    border: 1px solid #3a75a3;
}

.add-section {
    height: 62px;
    margin-top: 18px;
    padding-top: 10px;
    border-top: 1px solid #55849f;
    line-height: 22px;
    color: #3a75a3;
}

.resource {
    flex-direction: column;
    height: 200px;
    padding: 32px 27px;
}

.resource-actions {
    display: flex;
    margin-bottom: 5px;
}

.resource-actions button {
    width: 157px;
    height: 33px;
    margin-left: auto;
    padding: 0 0 1px;
    background: #fff;
    border: 1px solid #8f959e;
    border-radius: 3px;
    font: 14.8px 'Open Sans', sans-serif;
    color: #aaadb0;
}

.resource-actions .dots {
    margin: 7px 19px 0 27px;
}

.resource a {
    align-self: flex-start;
    font-size: 20.2px;
    line-height: 26px;
    color: #3d2f7d;
    text-decoration: underline 2.500px;
    text-underline-offset: 3px;
}

.hscroll {
    display: flex;
    align-items: center;
    flex: none;
    height: 15px;
    padding: 1px 7px 0 9px;
    background: #fafafc;
}

.hscroll .thumb {
    width: 1076px;
    height: 7px;
    margin: 0 auto 0 6px;
    background: #707376;
    border-radius: 4px;
}

.cursor {
    position: absolute;
    left: 700px;
    top: 364px;
}

.drawer-toggle {
    position: absolute;
    top: 10px;
    right: 0;
    display: flex;
    align-items: center;
    justify-content: center;
    width: 41px;
    height: 64px;
    padding-left: 5px;
    background: #dee2e6;
    border-radius: 32px 0 0 32px;
}

/* Taskbar */
.taskbar {
    display: flex;
    align-items: center;
    height: 60px;
    margin-top: auto;
    background: #1d1c1c;
    color: #fff;
}

.start {
    margin-left: 529px;
}

.search {
    display: flex;
    align-items: center;
    width: 273px;
    height: 38px;
    margin-left: 18px;
    padding-left: 14px;
    background: #f2f2f2;
    border-radius: 19px;
}

.search span {
    margin-left: 13px;
    font-size: 16px;
    color: #616161;
}

.school {
    margin-left: auto;
    margin-right: 7px;
}

.apps-row {
    display: flex;
    margin-left: 3px;
}

.app {
    position: relative;
    display: flex;
    align-items: center;
    justify-content: center;
    width: 49px;
    height: 49px;
    margin: 0 3px;
    border-radius: 5px;
}

.current {
    background: #2b2b2c;
}

.app i {
    position: absolute;
    bottom: 0;
    width: 8px;
    height: 4px;
    border: 0;
    border-radius: 2px;
    background: #9a9a9a;
}

.current i {
    width: 20px;
    background: #63c0ea;
}

.app b {
    position: absolute;
    left: 10px;
    top: 18px;
    width: 15px;
    font-size: 11px;
    line-height: 14px;
    text-align: center;
}

.tray {
    display: flex;
    align-items: center;
    margin-left: auto;
    margin-right: 26px;
    fill: none;
    stroke: #fff;
    stroke-width: 1.4;
}

.tray-slot {
    display: flex;
    justify-content: center;
    width: 40px;
}

.mic {
    stroke: #8fc4d3;
}

.battery {
    margin-left: 11px;
}

.clock {
    display: flex;
    flex-direction: column;
    width: 97px;
    margin-right: 11px;
    text-align: right;
    font-size: 14.5px;
    line-height: 20px;
}
```
